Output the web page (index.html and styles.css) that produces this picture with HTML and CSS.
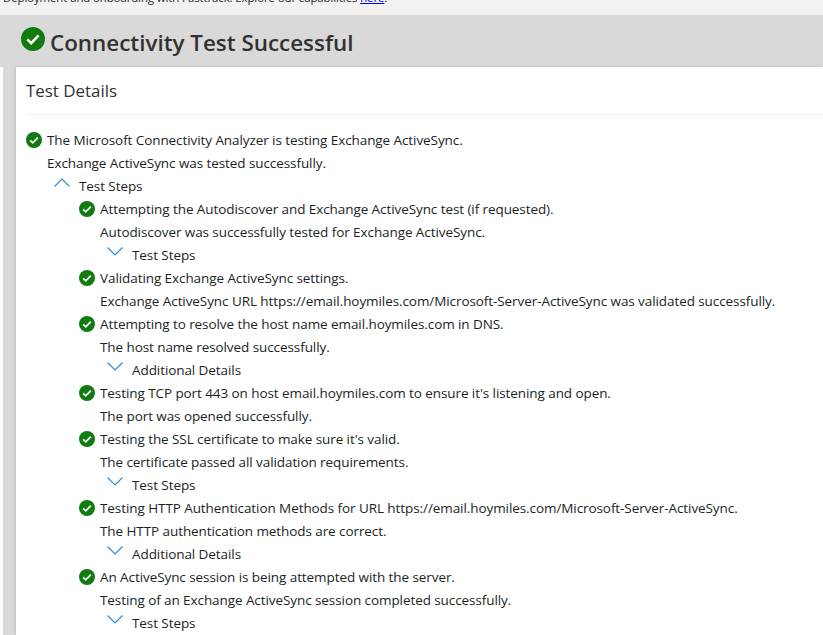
FILE: index.html
```html
<!DOCTYPE html>
<html>

<head>
    <title>Connectivity Test Successful</title>
    <link rel="stylesheet" href="styles.css">
</head>

<body>
    <svg class="defs" width="0" height="0">
        <symbol id="ok" viewBox="0 0 16 16">
            <circle cx="8" cy="8" r="8" fill="#107c10"/>
            <path d="M4.2 8.3l2.6 2.5 5-5.2" fill="none" stroke="#fff" stroke-width="1.7"/>
        </symbol>
        <symbol id="up" viewBox="0 0 16 9">
            <path d="M.5 8.5L8 1l7.5 7.5" fill="none" stroke="#2b88d8" stroke-width="1.1"/>
        </symbol>
        <symbol id="down" viewBox="0 0 16 9">
            <path d="M.5 .5L8 8l7.5-7.5" fill="none" stroke="#2b88d8" stroke-width="1.1"/>
        </symbol>
    </svg>

    <div class="notice">
        <p>Deployment and onboarding with Fasttrack. Explore our capabilities <a href="#">here</a>.</p>
    </div>

    <h1 class="result-title">
        <svg class="title-icon"><use href="#ok"/></svg>
        Connectivity Test Successful
    </h1>

    <div class="panel-wrap">
        <div class="panel">
            <h2 class="panel-title">Test Details</h2>

            <div class="steps">
                <div class="row"><svg class="ok"><use href="#ok"/></svg>The Microsoft Connectivity Analyzer is testing Exchange ActiveSync.</div>
                <div class="row msg">Exchange ActiveSync was tested successfully.</div>
                <div class="row toggle"><svg class="chev"><use href="#up"/></svg>Test Steps</div>

                <div class="sub">
                    <div class="row"><svg class="ok"><use href="#ok"/></svg>Attempting the Autodiscover and Exchange ActiveSync test (if requested).</div>
                    <div class="row msg">Autodiscover was successfully tested for Exchange ActiveSync.</div>
                    <div class="row toggle"><svg class="chev"><use href="#down"/></svg>Test Steps</div>

                    <div class="row"><svg class="ok"><use href="#ok"/></svg>Validating Exchange ActiveSync settings.</div>
                    <div class="row msg">Exchange ActiveSync URL https://email.hoymiles.com/Microsoft-Server-ActiveSync was validated successfully.</div>

                    <div class="row"><svg class="ok"><use href="#ok"/></svg>Attempting to resolve the host name email.hoymiles.com in DNS.</div>
                    <div class="row msg">The host name resolved successfully.</div>
                    <div class="row toggle"><svg class="chev"><use href="#down"/></svg>Additional Details</div>

                    <div class="row"><svg class="ok"><use href="#ok"/></svg>Testing TCP port 443 on host email.hoymiles.com to ensure it's listening and open.</div>
                    <div class="row msg">The port was opened successfully.</div>

                    <div class="row"><svg class="ok"><use href="#ok"/></svg>Testing the SSL certificate to make sure it's valid.</div>
                    <div class="row msg">The certificate passed all validation requirements.</div>
                    <div class="row toggle"><svg class="chev"><use href="#down"/></svg>Test Steps</div>

                    <div class="row"><svg class="ok"><use href="#ok"/></svg>Testing HTTP Authentication Methods for URL https://email.hoymiles.com/Microsoft-Server-ActiveSync.</div>
                    <div class="row msg">The HTTP authentication methods are correct.</div>
                    <div class="row toggle"><svg class="chev"><use href="#down"/></svg>Additional Details</div>

                    <div class="row"><svg class="ok"><use href="#ok"/></svg>An ActiveSync session is being attempted with the server.</div>
                    <div class="row msg">Testing of an Exchange ActiveSync session completed successfully.</div>
                    <div class="row toggle"><svg class="chev"><use href="#down"/></svg>Test Steps</div>
                </div>
            </div>
        </div>
    </div>
</body>

</html>
```

FILE: styles.css
```css
html, body {
    height: 100%;
}

body {
    margin: 0;
    overflow: hidden;
    background-color: #fff;
    color: #201f1e;
    font-family: "Open Sans", "Noto Sans", sans-serif;
    font-size: 13.5px;
    letter-spacing: -0.08px;
}

.defs {
    position: absolute;
}

.notice {
    display: flex;
    align-items: flex-end;
    height: 15px;
    overflow: hidden;
    padding-left: 3px;
    background-color: #f3f2f1;
    box-sizing: border-box;
}

.notice p {
    flex: none;
    margin: 0 0 9px;
    font-size: 11.4px;
    line-height: 16px;
}

.notice a {
    color: #0000ee;
}

.result-title {
    display: flex;
    align-items: center;
    gap: 5px;
    height: 52px;
    margin: 0;
    padding: 2px 0 0 21px;
    box-sizing: border-box;
    background-color: #d9d9d9;
    color: #323130;
    font-size: 22.4px;
    font-weight: 600;
    letter-spacing: 0;
}

.title-icon {
    width: 24px;
    height: 24px;
    margin-top: -6px;
}

.panel-wrap {
    height: 568px;
    margin-left: 3px;
    padding-left: 13px;
    background-color: #d9d9d9;
}

.panel {
    height: 100%;
    padding-left: 10px;
    background-color: #fff;
    box-shadow: -1px 0 3px rgba(0, 0, 0, 0.12);
}

.panel-title {
    height: 47px;
    margin: 0;
    border-bottom: 1px solid #f3f2f1;
    color: #323130;
    font-size: 16.9px;
    font-weight: 400;
    letter-spacing: 0;
    line-height: 47px;
}

.steps {
    padding-top: 13px;
}

.row {
    display: flex;
    align-items: center;
    height: 23px;
    white-space: nowrap;
}

.ok {
    flex: none;
    width: 16px;
    height: 16px;
    margin-right: 5px;
}

.msg {
    padding-left: 21px;
}

.toggle {
    padding-left: 28px;
}

.chev {
    flex: none;
    width: 16px;
    height: 9px;
    margin: -6px 9px 0 0;
}

.sub {
    padding-left: 53px;
}
```
